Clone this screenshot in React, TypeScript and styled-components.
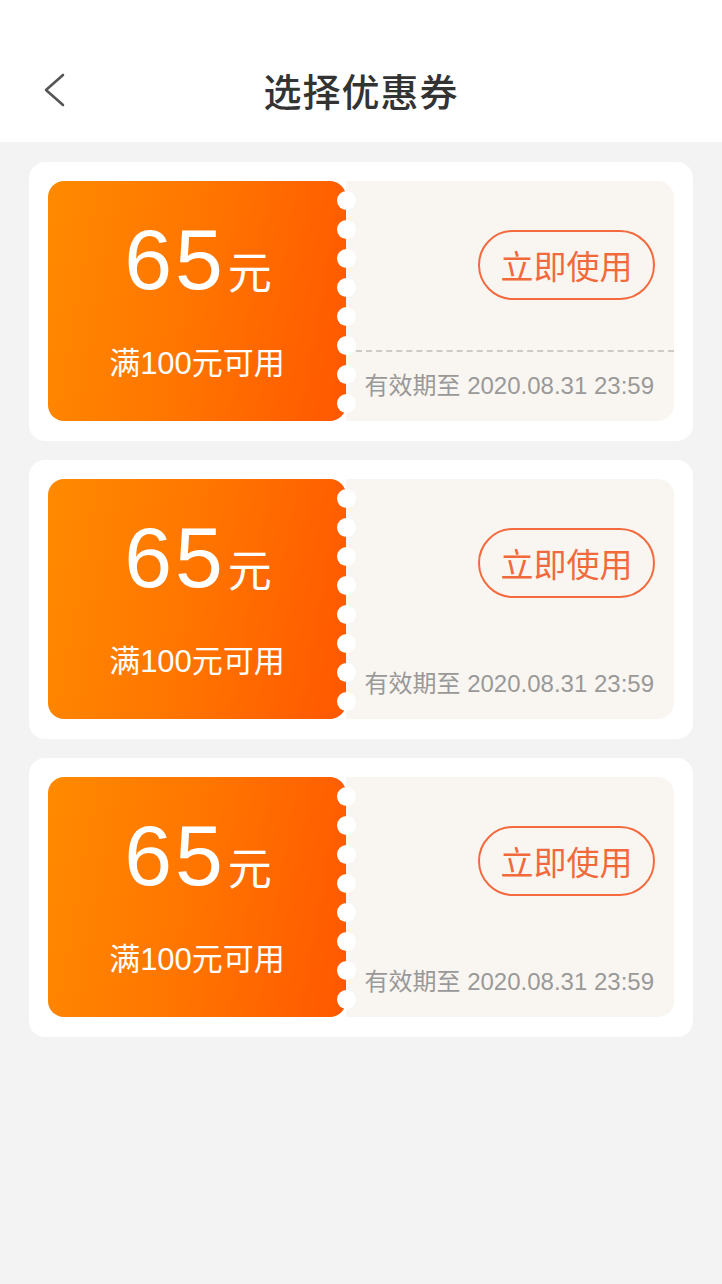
import React from "react";
import styled, { createGlobalStyle } from "styled-components";

const coupons = [
  { amount: 65, limit: 100, expire: "2020.08.31 23:59", dashed: true },
  { amount: 65, limit: 100, expire: "2020.08.31 23:59", dashed: false },
  { amount: 65, limit: 100, expire: "2020.08.31 23:59", dashed: false },
];

const App = () => {
  return (
    <Page>
      <GlobalStyle />
      <Header>
        <BackBtn>
          <svg width="24" height="36" viewBox="0 0 24 36">
            <polyline
              points="20,3 3,18 20,33"
              fill="none"
              stroke="#555"
              strokeWidth="2.6"
              strokeLinecap="round"
              strokeLinejoin="round"
            />
          </svg>
        </BackBtn>
        <Title>选择优惠券</Title>
      </Header>
      <List>
        {coupons.map((c, i) => (
          <Card key={i}>
            <Coupon>
              <Face>
                <Amount>
                  <Num>{c.amount}</Num>
                  <Unit>元</Unit>
                </Amount>
                <Limit>满{c.limit}元可用</Limit>
              </Face>
              <Perforation>
                {Array.from({ length: 8 }).map((_, j) => (
                  <Hole key={j} />
                ))}
              </Perforation>
              <Stub>
                <UseBtn>立即使用</UseBtn>
                <Divider $dashed={c.dashed} />
                <Expire>有效期至 {c.expire}</Expire>
              </Stub>
            </Coupon>
          </Card>
        ))}
      </List>
    </Page>
  );
};

const GlobalStyle = createGlobalStyle`
  body {
    margin: 0;
    background: #f3f3f3;
    font-family: "Liberation Sans", "Noto Sans CJK SC", sans-serif;
  }
`;

const Page = styled.div`
  min-height: 1284px;
  background: #f3f3f3;
`;

const Header = styled.div`
  position: relative;
  height: 142px;
  background: #fff;
  display: flex;
  align-items: center;
  justify-content: center;
  padding-top: 36px;
  box-sizing: border-box;
`;

const BackBtn = styled.div`
  position: absolute;
  left: 43px;
  top: 72px;
  width: 24px;
  height: 36px;
`;

const Title = styled.h1`
  margin: 0;
  font-family: "Noto Sans CJK SC", sans-serif;
  font-size: 38px;
  font-weight: 500;
  color: #333;
  letter-spacing: 1px;
`;

const List = styled.div`
  display: flex;
  flex-direction: column;
  gap: 19px;
  padding: 20px 29px;
`;

const Card = styled.div`
  background: #fff;
  border-radius: 16px;
  padding: 19px 19px 20px;
`;

const Coupon = styled.div`
  position: relative;
  display: flex;
  height: 240px;
`;

const Face = styled.div`
  width: 298px;
  border-radius: 16px;
  background: linear-gradient(100deg, #ff8a00 0%, #ff7400 50%, #ff5700 100%);
  display: flex;
  flex-direction: column;
  align-items: center;
  color: #fff;
`;

const Amount = styled.div`
  display: flex;
  align-items: baseline;
  margin-top: 35px;
  padding-left: 2px;
  height: 86px;
`;

const Num = styled.span`
  font-family: "Liberation Sans", sans-serif;
  font-size: 86px;
  line-height: 86px;
  letter-spacing: 3px;
`;

const Unit = styled.span`
  font-family: "Noto Sans CJK SC", sans-serif;
  font-size: 44px;
  margin-left: 2px;
`;

const Limit = styled.div`
  margin-top: 44px;
  font-size: 31px;
  line-height: 36px;
  font-family: "Liberation Sans", "Noto Sans CJK SC", sans-serif;
`;

const Perforation = styled.div`
  position: absolute;
  left: 289px;
  top: 10px;
  display: flex;
  flex-direction: column;
  gap: 10px;
`;

const Hole = styled.div`
  width: 19px;
  height: 19px;
  border-radius: 50%;
  background: #fff;
`;

const Stub = styled.div`
  flex: 1;
  background: #f9f6f2;
  border-radius: 0 16px 16px 0;
  display: flex;
  flex-direction: column;
  align-items: flex-end;
  padding: 49px 19px 0 10px;
`;

const UseBtn = styled.div`
  width: 177px;
  height: 70px;
  box-sizing: border-box;
  border: 2px solid #f46a3e;
  border-radius: 35px;
  display: flex;
  align-items: center;
  justify-content: center;
  font-family: "Noto Sans CJK SC", sans-serif;
  font-size: 33px;
  color: #f26a3c;
`;

const Divider = styled.div<{ $dashed: boolean }>`
  align-self: stretch;
  margin: 50px -19px 0 0;
  height: 0;
  border-top: 2px dashed ${(p) => (p.$dashed ? "#cfcac5" : "transparent")};
`;

const Expire = styled.div`
  margin-top: 19px;
  margin-right: 1px;
  font-size: 24px;
  line-height: 30px;
  color: #999;
`;

export default App;
